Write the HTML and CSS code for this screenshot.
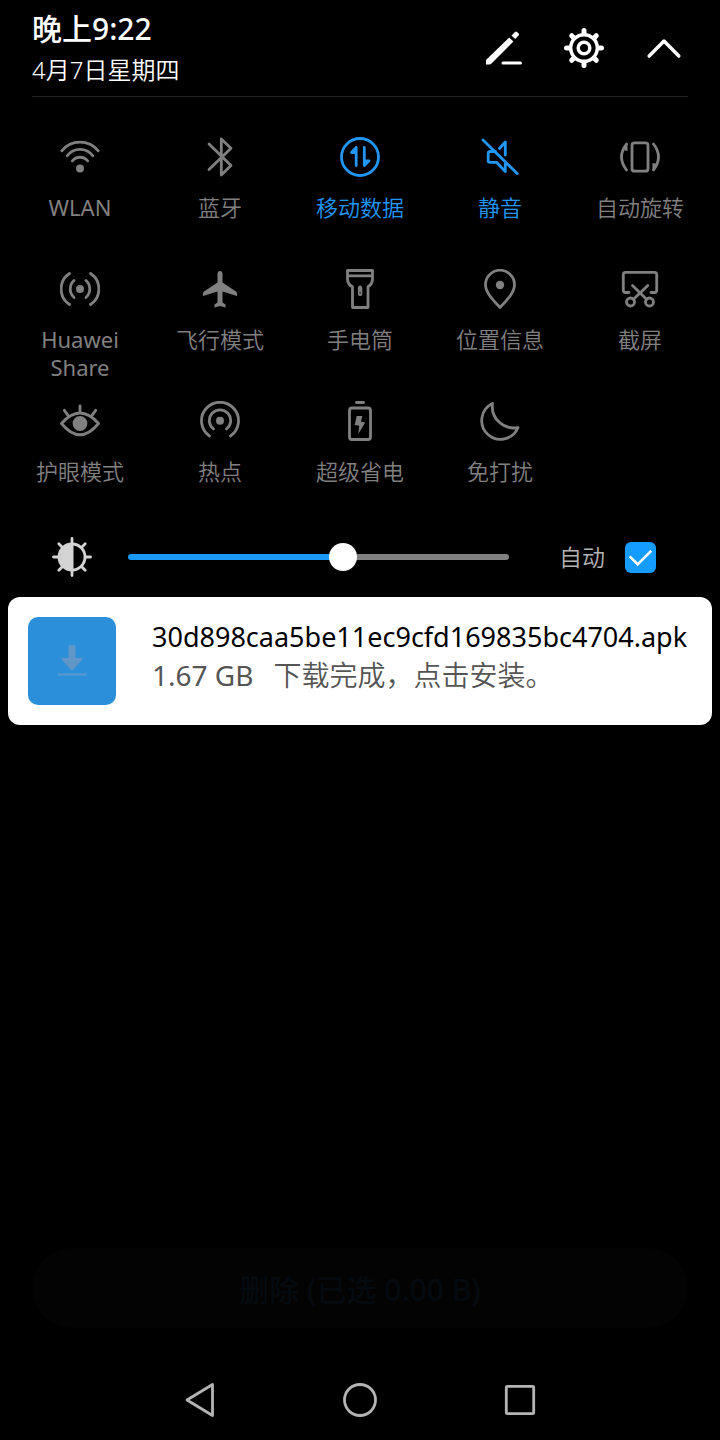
FILE: index.html
```html
<!DOCTYPE html>
<html lang="zh-CN">
<head>
    <meta charset="UTF-8">
    <meta name="viewport" content="width=device-width, initial-scale=1.0">
    <title>通知面板</title>
    <link rel="stylesheet" href="styles.css">
</head>
<body>
    <header class="header">
        <div class="clock">
            <div class="time">晚上9:22</div>
            <div class="date">4月7日星期四</div>
        </div>
        <div class="actions">
            <button type="button" class="icon-btn" aria-label="编辑">
                <svg class="icon solid" viewBox="0 0 40 40">
                    <path d="M2 36.500V32L25.200 9.500 29.400 13.500 8 35 6 36.500Z"/>
                    <path d="M27.500 7.500 31 4Q32 3.200 33 4L34.600 5.600Q35.400 6.500 34.600 7.500L31.200 11Z"/>
                    <path class="line" d="M19 35H36.500" stroke-width="3"/>
                </svg>
            </button>
            <button type="button" class="icon-btn" aria-label="设置">
                <svg class="icon" viewBox="0 0 40 40">
                    <circle class="ring" cx="20" cy="20" r="13.300"/>
                    <circle class="ring" cx="20" cy="20" r="5.800"/>
                    <path class="teeth" d="M20 5V2.500M20 35V37.500M5 20H2.500M35 20H37.500M9.500 9.500 7.700 7.700M30.500 9.500 32.300 7.700M9.500 30.500 7.700 32.300M30.500 30.500 32.300 32.300"/>
                </svg>
            </button>
            <button type="button" class="icon-btn" aria-label="收起">
                <svg class="icon" viewBox="0 0 40 40">
                    <path class="ring" d="M5.200 28 20 13 34.800 28"/>
                </svg>
            </button>
        </div>
    </header>

    <main class="panel">
        <div class="tiles">
            <button type="button" class="tile">
                <svg class="icon" viewBox="0 0 40 40">
                    <path d="M1.800 13.800A23.500 23.500 0 0 1 38.200 13.800M7.300 18.800A15.700 15.700 0 0 1 32.700 18.800M12.300 24A9.800 9.800 0 0 1 27.700 24"/>
                    <circle class="dot" cx="20" cy="31.500" r="4"/>
                </svg>
                <span class="latin">WLAN</span>
            </button>
            <button type="button" class="tile">
                <svg class="icon" viewBox="0 0 40 40">
                    <path d="M9 7 31 28.500 21.300 38V2L31 11.300 9 32.500"/>
                </svg>
                <span>蓝牙</span>
            </button>
            <button type="button" class="tile on">
                <svg class="icon" viewBox="0 0 40 40">
                    <circle cx="20" cy="20" r="18.500"/>
                    <path d="M16.200 28.500V10.500L11.500 15.500H16M24.300 10.500V28.500L29 23.800H24.500"/>
                </svg>
                <span>移动数据</span>
            </button>
            <button type="button" class="tile on">
                <svg class="icon" viewBox="0 0 40 40">
                    <path d="M3 3 37.200 36.500M19.500 11.500 25.300 5V18M15.500 14.500H10Q8.200 14.500 8.200 16.300V23.500Q8.200 25.300 10 25.300H16.500L25.300 34.500V27"/>
                </svg>
                <span>静音</span>
            </button>
            <button type="button" class="tile">
                <svg class="icon" viewBox="0 0 40 40">
                    <rect x="12" y="5.800" width="16" height="28.400" rx="2.500"/>
                    <path d="M6.500 7Q-3.500 20 6.500 33M33.500 7Q43.500 20 33.500 33"/>
                    <path class="dot" d="M7.500 6.500 2.500 13 7.500 14ZM32.500 33.500 37.500 27 32.500 26Z"/>
                </svg>
                <span>自动旋转</span>
            </button>
            <button type="button" class="tile">
                <svg class="icon" viewBox="0 0 40 40">
                    <path d="M9.500 4.500A18.500 18.500 0 0 0 9.500 35.500M30.500 4.500A18.500 18.500 0 0 1 30.500 35.500M14 11.500A11.500 11.500 0 0 0 14 28.500M26 11.500A11.500 11.500 0 0 1 26 28.500"/>
                    <circle class="dot" cx="20" cy="20" r="4"/>
                </svg>
                <span class="latin">Huawei Share</span>
            </button>
            <button type="button" class="tile">
                <svg class="icon solid" viewBox="0 0 40 40">
                    <path d="M17.500 5Q17.500 2 20 2T22.500 5V13.500L36 22.500Q37 23.200 37 24.500V27L22.500 22.500V33.500L25.500 35.500V38.500L20 37 14.500 38.500V35.500L17.500 33.500V22.500L3 27V24.500Q3 23.200 4 22.500L17.500 13.500Z"/>
                </svg>
                <span>飞行模式</span>
            </button>
            <button type="button" class="tile">
                <svg class="icon" viewBox="0 0 40 40">
                    <path d="M7.500 1.500H32.500V10.500Q32 15.500 28 17.800V38.500H12.500V17.800Q8 15.500 7.500 10.500ZM7.500 6.800H32.500"/>
                    <rect x="18.800" y="18" width="2.600" height="8" rx="1" stroke-width="1.800"/>
                    <path d="M20 18V21.500"/>
                </svg>
                <span>手电筒</span>
            </button>
            <button type="button" class="tile">
                <svg class="icon" viewBox="0 0 40 40">
                    <path d="M20 38.500C14 32 5.500 24 5.500 15.700A14.500 14.500 0 0 1 34.500 15.700C34.500 24 26 32 20 38.500Z"/>
                    <circle class="dot" cx="20" cy="16" r="4.200"/>
                </svg>
                <span>位置信息</span>
            </button>
            <button type="button" class="tile">
                <svg class="icon" viewBox="0 0 40 40">
                    <path d="M9 23.500H5.500Q3.300 23.500 3.300 21.300V5.500Q3.300 3.300 5.500 3.300H34.500Q36.700 3.300 36.700 5.500V21.300Q36.700 23.500 34.500 23.500H31M12.500 16.500 26.500 30.300M27.800 16.500 13.500 30.300"/>
                    <circle cx="10.500" cy="33" r="4"/>
                    <circle cx="29.500" cy="33" r="4"/>
                </svg>
                <span>截屏</span>
            </button>
            <button type="button" class="tile">
                <svg class="icon" viewBox="0 0 40 40">
                    <path d="M1.500 22.500Q20 1.500 38.500 22.500 20 45 1.500 22.500ZM20 5V11M4.300 9.300 8 14.300M35.700 9.300 32 14.300"/>
                    <circle class="dot" cx="20" cy="22.500" r="7.400"/>
                </svg>
                <span>护眼模式</span>
            </button>
            <button type="button" class="tile">
                <svg class="icon" viewBox="0 0 40 40">
                    <path d="M9.500 35A18.500 18.500 0 1 1 30.500 35M13.500 28A10.700 10.700 0 1 1 26.500 28"/>
                    <circle class="dot" cx="20" cy="19.700" r="4"/>
                </svg>
                <span>热点</span>
            </button>
            <button type="button" class="tile">
                <svg class="icon" viewBox="0 0 40 40">
                    <rect x="9.500" y="7" width="21" height="31.500" rx="2.500"/>
                    <path d="M16.500 1.500H23.500"/>
                    <path class="dot" d="M16.700 15H22.300L21 20.700 25.200 21.500 18.300 33 19.200 24.800 14.700 24Z"/>
                </svg>
                <span>超级省电</span>
            </button>
            <button type="button" class="tile">
                <svg class="icon" viewBox="0 0 40 40">
                    <path d="M12.500 2.500A18.800 18.800 0 1 0 38 26.500 21.500 21.500 0 0 1 12.500 2.500Z"/>
                </svg>
                <span>免打扰</span>
            </button>
        </div>

        <div class="brightness">
            <svg class="icon sun" viewBox="0 0 40 40">
                <circle cx="20" cy="20" r="13"/>
                <path class="dot" d="M21.500 6.500A13.500 13.500 0 1 0 21.500 33.500Z"/>
                <path d="M20 1.500V6M20 34V38.500M1.500 20H6M34 20H38.500M6.800 6.800 10 10M33.200 6.800 30 10M6.800 33.200 10 30M33.200 33.200 30 30"/>
            </svg>
            <input type="range" class="slider" min="0" max="100" value="57" aria-label="亮度">
            <label class="auto" for="auto">自动</label>
            <input type="checkbox" class="check" id="auto" checked>
        </div>

        <article class="notice">
            <svg class="notice-icon" viewBox="0 0 88 88">
                <path d="M40.500 29.500Q40.500 28 42 28H46Q47.500 28 47.500 29.500V41H53Q55.500 41 54 43L45.500 52.500Q44 54 42.500 52.500L34 43Q32.500 41 35 41H40.500Z"/>
                <path d="M30 56.500H58.500V58.500H30Z"/>
            </svg>
            <div class="notice-text">
                <h1>30d898caa5be11ec9cfd169835bc4704.apk</h1>
                <p><span class="latin">1.67 GB</span><span>下载完成，点击安装。</span></p>
            </div>
        </article>
    </main>

    <button type="button" class="delete" disabled>删除 (已选 0.00 B)</button>

    <nav class="navbar">
        <button type="button" class="icon-btn" aria-label="返回">
            <svg class="icon" viewBox="0 0 40 40">
                <path d="M7 20 32.500 4.500V35.500Z"/>
            </svg>
        </button>
        <button type="button" class="icon-btn" aria-label="主屏幕">
            <svg class="icon" viewBox="0 0 40 40">
                <circle cx="20" cy="20" r="15.500"/>
            </svg>
        </button>
        <button type="button" class="icon-btn" aria-label="最近任务">
            <svg class="icon" viewBox="0 0 40 40">
                <rect x="6.300" y="6.300" width="27.400" height="27.400" rx="1"/>
            </svg>
        </button>
    </nav>
</body>
</html>
```

FILE: styles.css
```css
* {
    box-sizing: border-box;
}

body {
    font-family: "Noto Sans", "Noto Sans CJK SC", sans-serif;
    margin: 0;
    min-height: 100vh;
    display: flex;
    flex-direction: column;
    background: #000;
    color: #fff;
}

button {
    padding: 0;
    border: none;
    background: none;
    color: inherit;
    font-family: inherit;
    cursor: pointer;
}

.icon {
    display: block;
    width: 40px;
    height: 40px;
    flex: none;
    fill: none;
    stroke: currentColor;
    stroke-width: 2.8;
    stroke-linecap: round;
    stroke-linejoin: round;
}

.solid,
.dot {
    fill: currentColor;
    stroke: none;
}

.line {
    stroke: currentColor;
}

.ring {
    stroke-width: 3.5;
}

.teeth {
    stroke-width: 5;
}

/* header */
.header {
    display: flex;
    justify-content: space-between;
    align-items: flex-start;
    margin: 0 32px;
    padding: 8px 4px 6px 0;
    border-bottom: 1px solid #222;
}

.time {
    font-size: 30px;
    line-height: 41px;
    font-weight: 500;
}

.date {
    font-size: 24px;
    font-weight: 350;
    line-height: 41px;
}

.actions {
    display: flex;
    align-items: center;
    gap: 40px;
    height: 80px;
}

/* quick switches */
.panel {
    flex: 1;
}

.tiles {
    display: grid;
    grid-template-columns: repeat(5, 1fr);
    grid-auto-rows: minmax(132px, auto);
    padding: 40px 10px 0;
}

.tile {
    display: flex;
    flex-direction: column;
    align-items: center;
    gap: 16px;
    padding: 0 20px;
    color: #808080;
    font-size: 22px;
    font-weight: 350;
    line-height: 28px;
}

.tile.on {
    color: #2196f3;
}

.latin {
    font-weight: 400;
}

/* brightness */
.brightness {
    display: flex;
    align-items: center;
    padding: 4px 64px 20px 52px;
}

.sun {
    color: #d4d4d4;
}

.slider {
    flex: 1;
    min-width: 0;
    height: 28px;
    margin: 0 50px 0 36px;
    background: none;
    -webkit-appearance: none;
    appearance: none;
}

.slider::-webkit-slider-runnable-track {
    height: 6px;
    border-radius: 3px;
    background: linear-gradient(to right, #1a9af5 57%, #808080 57%);
}

.slider::-webkit-slider-thumb {
    -webkit-appearance: none;
    width: 28px;
    height: 28px;
    margin-top: -11px;
    border-radius: 50%;
    background: #fff;
}

.auto {
    color: #b4b4b4;
    font-size: 23px;
    font-weight: 350;
    line-height: 28px;
    margin-right: 20px;
}

.check {
    display: grid;
    place-items: center;
    width: 31px;
    height: 31px;
    margin: 0;
    border-radius: 6px;
    background: #333;
    -webkit-appearance: none;
    appearance: none;
}

.check:checked {
    background: #159cff;
}

.check:checked::before {
    content: "";
    width: 18px;
    height: 10px;
    margin-bottom: 5px;
    border-left: 3px solid #fff;
    border-bottom: 3px solid #fff;
    border-radius: 1px;
    transform: rotate(-45deg);
}

/* notification */
.notice {
    display: flex;
    gap: 36px;
    margin: 0 8px;
    padding: 20px;
    border-radius: 12px;
    background: #fff;
    color: #000;
}

.notice-icon {
    flex: none;
    width: 88px;
    height: 88px;
    border-radius: 10px;
    background: #2b90d9;
    fill: #6096c8;
}

.notice-text {
    min-width: 0;
    line-height: 39px;
}

.notice-text h1 {
    margin: 0;
    font-size: 27px;
    font-weight: 400;
}

.notice-text p {
    display: flex;
    gap: 20px;
    margin: 0;
    color: #555;
    font-size: 28px;
    font-weight: 350;
}

/* bottom */
.delete {
    height: 80px;
    margin: 0 32px 32px;
    border-radius: 40px;
    background: #030303;
    color: #040a10;
    font-size: 30px;
    font-weight: 500;
}

.navbar {
    display: flex;
    justify-content: center;
    gap: 120px;
    padding: 20px 0;
    color: #b4b4b4;
}
```
